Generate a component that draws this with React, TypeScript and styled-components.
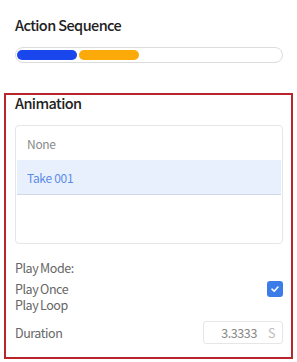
import React from "react";
import styled, { createGlobalStyle } from "styled-components";

const Global = createGlobalStyle`
  html, body { margin: 0; padding: 0; background: #fff; }
  body { font-family: "Noto Sans CJK SC", "Noto Sans", sans-serif; }
`;

const Page = styled.div`
  width: 297px;
  padding-top: 15px;
  box-sizing: border-box;
`;

const Section = styled.div`
  padding: 0 14px 0 15px;
  display: flex;
  flex-direction: column;
`;

const Title = styled.div<{ $lh?: number }>`
  font-size: 14.5px;
  line-height: ${(p) => p.$lh ?? 20}px;
  color: #222;
  font-weight: 500;
  letter-spacing: -0.6px;
`;

const Track = styled.div`
  margin-top: 12px;
  height: 16px;
  box-sizing: border-box;
  border: 1px solid #dcdcdc;
  border-radius: 8px;
  display: flex;
  align-items: center;
  gap: 2px;
  padding: 0 1px;
`;

const Segment = styled.div<{ $color: string }>`
  width: 60px;
  height: 10px;
  border-radius: 5px;
  background: ${(p) => p.$color};
`;

const Panel = styled.div`
  margin: 30px 4px 0 4px;
  border: 2px solid #b8262c;
  padding: 0 8px 13px 9px;
  display: flex;
  flex-direction: column;
`;

const List = styled.div`
  margin-top: 14px;
  height: 119px;
  box-sizing: border-box;
  border: 1px solid #e6e6e6;
  border-radius: 4px;
  padding: 0 1px;
`;

const Item = styled.div<{ $active?: boolean }>`
  height: ${(p) => (p.$active ? 35 : 34)}px;
  box-sizing: border-box;
  display: flex;
  align-items: center;
  padding-left: 10px;
  font-size: 12px;
  letter-spacing: -0.3px;
  color: ${(p) => (p.$active ? "#5b8be6" : "#8a8a8a")};
  background: ${(p) => (p.$active ? "#e8f0fd" : "transparent")};
  border-bottom: ${(p) => (p.$active ? "1px solid #cfd8e6" : "none")};
`;

const Label = styled.div`
  font-size: 12.5px;
  line-height: 16px;
  color: #666;
  letter-spacing: -0.45px;
  word-spacing: -0.5px;
`;

const ModeRow = styled.div`
  margin-top: 16px;
`;

const Options = styled.div`
  margin-top: 5px;
  display: flex;
  justify-content: space-between;
  align-items: flex-start;
`;

const Check = styled.div`
  width: 16px;
  height: 16px;
  border-radius: 3px;
  background: #3c7ce9;
  display: flex;
  align-items: center;
  justify-content: center;
`;

const DurationRow = styled.div`
  margin-top: 8px;
  display: flex;
  justify-content: space-between;
  align-items: center;
`;

const Input = styled.div`
  width: 80px;
  height: 23px;
  box-sizing: border-box;
  border: 1px solid #e6e6e6;
  border-radius: 3px;
  display: flex;
  align-items: center;
  justify-content: flex-end;
  padding-right: 7px;
  font-size: 12.5px;
  letter-spacing: -0.4px;
  color: #888;
  gap: 11px;
`;

const Unit = styled.span`
  color: #bbb;
`;

export default function App() {
  return (
    <Page>
      <Global />
      <Section>
        <Title>Action Sequence</Title>
        <Track>
          <Segment $color="#1a46ee" />
          <Segment $color="#fbaa0a" />
        </Track>
      </Section>
      <Panel>
        <Title $lh={16}>Animation</Title>
        <List>
          <Item>None</Item>
          <Item $active>Take 001</Item>
        </List>
        <ModeRow>
          <Label>Play Mode:</Label>
        </ModeRow>
        <Options>
          <div>
            <Label>Play Once</Label>
            <Label>Play Loop</Label>
          </div>
          <Check>
            <svg width="10" height="10" viewBox="0 0 10 10">
              <path d="M2 5.2 L4.2 7.2 L8 3" fill="none" stroke="#fff" strokeWidth="1.6" strokeLinecap="round" strokeLinejoin="round" />
            </svg>
          </Check>
        </Options>
        <DurationRow>
          <Label>Duration</Label>
          <Input>
            <span>3.3333</span>
            <Unit>S</Unit>
          </Input>
        </DurationRow>
      </Panel>
    </Page>
  );
}
